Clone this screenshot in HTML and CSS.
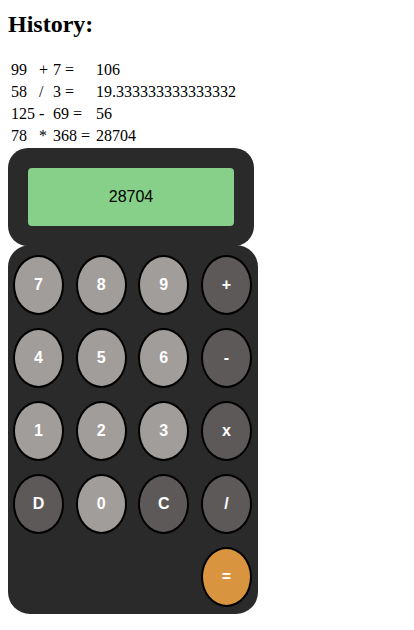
FILE: index.html
```html
<!DOCTYPE html>
<html>
<head>
<meta charset="utf-8">
<link rel="stylesheet" href="styles.css">
</head>
<body>
<h2 class="title">History:</h2>
<table class="history">
  <tr><td>99</td><td>+</td><td class="rhs">7 =</td><td>106</td></tr>
  <tr><td>58</td><td>/</td><td class="rhs">3 =</td><td>19.333333333333332</td></tr>
  <tr><td>125</td><td>-</td><td class="rhs">69 =</td><td>56</td></tr>
  <tr><td>78</td><td>*</td><td class="rhs">368 =</td><td>28704</td></tr>
</table>
<div class="screen"><div class="display">28704</div></div>
<div class="keypad">
  <button class="key light">7</button>
  <button class="key light">8</button>
  <button class="key light">9</button>
  <button class="key dark">+</button>
  <button class="key light">4</button>
  <button class="key light">5</button>
  <button class="key light">6</button>
  <button class="key dark">-</button>
  <button class="key light">1</button>
  <button class="key light">2</button>
  <button class="key light">3</button>
  <button class="key dark">x</button>
  <button class="key dark">D</button>
  <button class="key light">0</button>
  <button class="key dark">C</button>
  <button class="key dark">/</button>
  <button class="key equals">=</button>
</div>
</body>
</html>
```
FILE: styles.css
```css
body {
  margin: 8px;
  background: #fff;
  font-family: "Liberation Serif", "Times New Roman", serif;
  color: #000;
}
.title {
  font-size: 24px;
  font-weight: bold;
  margin: 0 0 19px;
  padding-top: 1px;
  line-height: 30px;
}
.history {
  font-size: 16px;
  border-spacing: 2px;
  margin-left: 0;
}
.history td {
  padding: 1px;
  line-height: 18px;
}
.history .rhs {
  padding-left: 2px;
  padding-right: 3px;
}
.screen {
  width: 246px;
  height: 98px;
  box-sizing: border-box;
  padding: 20px;
  background: #2a2a2a;
  border-radius: 20px;
}
.display {
  height: 58px;
  background: #86d089;
  border-radius: 4px;
  display: flex;
  align-items: center;
  justify-content: center;
  font-family: "Liberation Sans", Arial, sans-serif;
  font-size: 16px;
  color: #000;
}
.keypad {
  width: 250px;
  height: 369px;
  box-sizing: border-box;
  margin-top: -1px;
  padding: 10px 6px 7px 5px;
  background: #2a2a2a;
  border-radius: 22px;
  display: grid;
  grid-template-columns: repeat(4, 51px);
  grid-auto-rows: 60px;
  row-gap: 13px;
  justify-content: space-between;
}
.key {
  width: 51px;
  height: 60px;
  box-sizing: border-box;
  border: 2px solid #000;
  border-radius: 50%;
  padding: 0;
  color: #fff;
  font-family: "Liberation Sans", Arial, sans-serif;
  font-weight: bold;
  font-size: 16px;
}
.light { background: #a09d9a; }
.dark { background: #5d5958; }
.equals {
  background: #d8943f;
  grid-column: 4;
}
```
